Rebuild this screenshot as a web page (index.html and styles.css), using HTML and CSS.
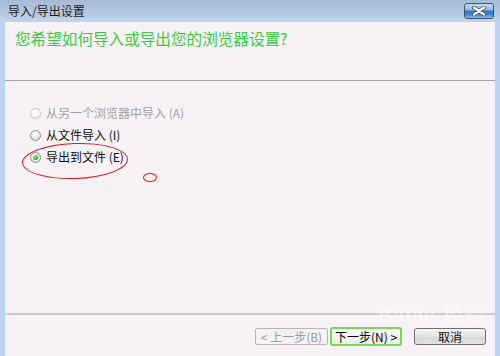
FILE: index.html
```html
<!DOCTYPE html>
<html lang="zh-CN">
<head>
<meta charset="utf-8">
<title>导入/导出设置</title>
<link rel="stylesheet" href="styles.css">
</head>
<body>
<div class="window">
  <div class="titlebar">
    <span class="title">导入/导出设置</span>
    <button class="close" aria-label="关闭">
      <svg width="18" height="10" viewBox="0 0 18 10">
        <path d="M4 1.5 L14 8.5 M14 1.5 L4 8.5" stroke="#4a5560" stroke-width="4.2" stroke-linecap="round"/>
        <path d="M4 1.5 L14 8.5 M14 1.5 L4 8.5" stroke="#ffffff" stroke-width="2.4" stroke-linecap="round"/>
      </svg>
    </button>
  </div>
  <div class="client">
    <div class="header">
      <h1 class="headline">您希望如何导入或导出您的浏览器设置?</h1>
    </div>
    <div class="options">
      <label class="opt disabled"><span class="radio"></span>从另一个浏览器中导入 (A)</label>
      <label class="opt"><span class="radio"></span>从文件导入 (I)</label>
      <label class="opt"><span class="radio checked"></span>导出到文件 (E)</label>
      <span class="mark mark-big"></span>
      <span class="mark mark-small"></span>
    </div>
    <div class="footer">
      <button class="btn btn-disabled">&lt; 上一步(B)</button>
      <button class="btn btn-default">下一步(N) &gt;</button>
      <button class="btn btn-cancel">取消</button>
      <span class="watermark">Bai<span class="wm-du">du</span> 经验</span>
    </div>
  </div>
</div>
</body>
</html>
```

FILE: styles.css
```css
* { box-sizing: border-box; }
html, body { margin: 0; padding: 0; }
body {
  width: 500px;
  height: 356px;
  overflow: hidden;
  font-family: "Noto Sans CJK SC", "Noto Sans", "DejaVu Sans", sans-serif;
  font-size: 12px;
}
.window {
  width: 500px;
  height: 356px;
  display: flex;
  flex-direction: column;
  background: #bdd3f1;
}
.titlebar {
  height: 22px;
  flex: none;
  display: flex;
  align-items: flex-start;
  justify-content: space-between;
  padding: 0 6px 0 8px;
  background: linear-gradient(#a6bbd5, #b4c8e2 60%, #c2d5ee);
}
.title {
  font-size: 12px;
  line-height: 22px;
  color: #1c1c1c;
}
.close {
  margin-top: 3px;
  width: 30px;
  height: 16px;
  padding: 0;
  border: 1px solid #3c5568;
  border-radius: 3px;
  background: linear-gradient(#c4d8f0 0%, #9cbde6 40%, #2f72c8 52%, #3f86d6 75%, #8fb8ea 100%);
  display: flex;
  align-items: center;
  justify-content: center;
}
.client {
  flex: 1;
  margin: 0 5px;
  background: #f6f2f6;
  display: flex;
  flex-direction: column;
  position: relative;
}
.header {
  height: 59px;
  flex: none;
  border-bottom: 1px solid #a4a2a6;
  padding: 6px 0 0 10px;
}
.headline {
  margin: 0;
  font-weight: normal;
  font-size: 15.6px;
  line-height: 20px;
  color: #3ccc3c;
}
.options {
  flex: 1;
  display: flex;
  flex-direction: column;
  gap: 6px;
  padding: 24px 0 0 25px;
  position: relative;
}
.opt {
  display: flex;
  align-items: center;
  gap: 5px;
  height: 16px;
  line-height: 16px;
  color: #111;
  white-space: pre;
}
.opt.disabled { color: #a3a1a3; }
.radio {
  width: 11px;
  height: 11px;
  border-radius: 50%;
  border: 1px solid #8d8f90;
  background: radial-gradient(circle at 40% 35%, #ffffff 0%, #ececec 50%, #cfcfcf 100%);
  display: flex;
  align-items: center;
  justify-content: center;
  flex: none;
}
.opt.disabled .radio {
  border-color: #c2c2c2;
  background: radial-gradient(circle at 40% 35%, #ffffff, #ebebeb);
}
.radio.checked::after {
  content: "";
  width: 5px;
  height: 5px;
  border-radius: 50%;
  background: radial-gradient(circle at 40% 35%, #a8f090 0%, #3fb432 55%, #1c7a1c 100%);
}
.mark {
  position: absolute;
  border: 1px solid #e0161c;
  border-radius: 50%;
}
.mark-big {
  left: 17px;
  top: 62px;
  width: 106px;
  height: 36px;
  transform: rotate(-2deg);
}
.mark-small {
  left: 138px;
  top: 92px;
  width: 14px;
  height: 9px;
}
.footer {
  height: 43px;
  flex: none;
  border-top: 2px solid #cbc8cc;
  display: flex;
  justify-content: flex-end;
  align-items: flex-start;
  padding: 12px 9px 0 0;
  position: relative;
}
.btn {
  height: 17px;
  padding: 0;
  font-family: inherit;
  font-size: 12px;
  line-height: 15px;
  border-radius: 2px;
  color: #111;
}
.btn-disabled {
  width: 73px;
  margin-top: 1px;
  border: 1px solid #b6b4b6;
  background: #f4f2f4;
  color: #9c9a9c;
}
.btn-default {
  width: 72px;
  height: 19px;
  margin-left: 2px;
  border: 2px solid #78d850;
  border-radius: 3px;
  background: linear-gradient(#fafafa, #ececec);
  color: #000;
}
.btn-cancel {
  width: 72px;
  margin-top: 1px;
  margin-left: 12px;
  border: 1px solid #707070;
  border-radius: 3px;
  background: linear-gradient(#f6f6f6, #e4e4e4 50%, #d6d6d6 51%, #e2e2e2);
}
.watermark {
  position: absolute;
  left: 373px;
  top: -16px;
  font-family: "Liberation Sans", "Noto Sans CJK SC", sans-serif;
  font-size: 20px;
  font-weight: bold;
  color: rgba(255, 255, 255, 0.45);
  pointer-events: none;
  letter-spacing: 1px;
}
.wm-du { font-size: 18px; }
```
